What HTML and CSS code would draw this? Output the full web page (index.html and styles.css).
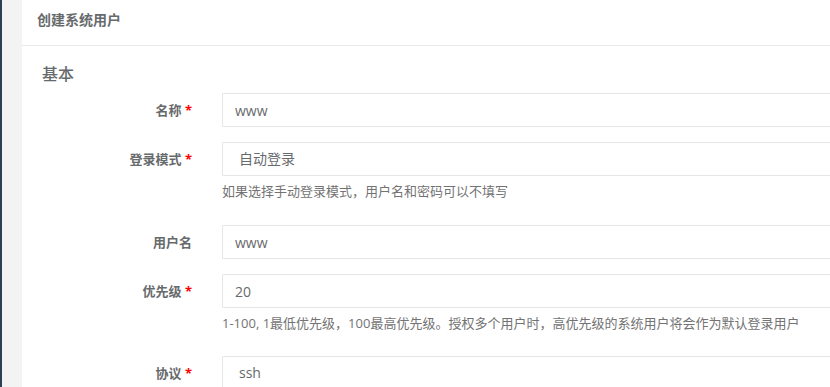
FILE: index.html
```html
<!DOCTYPE html>
<html lang="zh-CN">
<head>
    <meta charset="UTF-8">
    <meta name="viewport" content="width=device-width, initial-scale=1.0">
    <title>创建系统用户</title>
    <link rel="stylesheet" href="styles.css">
</head>
<body>
    <div class="page">
        <div class="nav-edge"></div>
        <div class="gutter"></div>
        <div class="ibox">
            <div class="ibox-title">
                <h5>创建系统用户</h5>
            </div>
            <div class="ibox-content">
                <h3>基本</h3>

                <div class="form-group">
                    <label class="control-label">名称 <span class="req">*</span></label>
                    <div class="field">
                        <input type="text" class="form-control" value="www">
                    </div>
                </div>

                <div class="form-group">
                    <label class="control-label">登录模式 <span class="req">*</span></label>
                    <div class="field">
                        <div class="form-control select">自动登录</div>
                        <div class="help-block">如果选择手动登录模式，用户名和密码可以不填写</div>
                    </div>
                </div>

                <div class="form-group">
                    <label class="control-label">用户名</label>
                    <div class="field">
                        <input type="text" class="form-control" value="www">
                    </div>
                </div>

                <div class="form-group">
                    <label class="control-label">优先级 <span class="req">*</span></label>
                    <div class="field">
                        <input type="text" class="form-control" value="20">
                        <div class="help-block short">1-100, 1最低优先级，100最高优先级。授权多个用户时，高优先级的系统用户将会作为默认登录用户</div>
                    </div>
                </div>

                <div class="form-group">
                    <label class="control-label">协议 <span class="req">*</span></label>
                    <div class="field">
                        <div class="form-control select">ssh</div>
                    </div>
                </div>
            </div>
        </div>
    </div>
</body>
</html>
```
FILE: styles.css
```css
html, body {
    margin: 0;
    padding: 0;
    overflow: hidden;
}

body {
    font-family: "Open Sans", "Noto Sans CJK SC", sans-serif;
    font-size: 13px;
    color: #676a6c;
    background-color: #fff;
}

.page {
    display: flex;
    height: 387px;
    overflow: hidden;
}

.nav-edge {
    width: 2px;
    background-color: #2f4050;
    flex-shrink: 0;
}

.gutter {
    width: 20px;
    background-color: #f3f3f4;
    flex-shrink: 0;
}

.ibox {
    flex: 1;
    min-width: 0;
    overflow: hidden;
    background-color: #fff;
}

.ibox-title {
    height: 34px;
    border-bottom: 1px solid #e7eaec;
    padding: 11px 15px 0;
}

.ibox-title h5 {
    margin: 0;
    font-size: 14px;
    line-height: 17px;
    font-weight: 600;
    color: #676a6c;
}

.ibox-content {
    padding: 18px 0 0 0;
}

.ibox-content h3 {
    margin: 0 0 9px 20px;
    font-size: 16px;
    line-height: 20px;
    font-weight: 500;
    color: #676a6c;
}

.form-group {
    display: grid;
    grid-template-columns: 170px 900px;
    column-gap: 30px;
    margin-bottom: 15px;
}

.control-label {
    text-align: right;
    font-weight: 700;
    font-size: 13px;
    line-height: 20px;
    padding-top: 7px;
    color: #676a6c;
}

.req {
    color: red;
}

.form-control {
    display: block;
    width: 100%;
    height: 34px;
    box-sizing: border-box;
    padding: 6px 12px;
    border: 1px solid #e5e6e7;
    border-radius: 1px;
    font-family: "Open Sans", "Noto Sans CJK SC", sans-serif;
    font-size: 14px;
    line-height: 20px;
    color: #676a6c;
    background-color: #fff;
    margin: 0;
}

.form-control.select {
    padding-left: 16px;
}

.help-block {
    margin: 5px 0 9px;
    font-size: 13px;
    line-height: 20px;
    color: #737373;
}

.help-block.short {
    margin-bottom: 8px;
}
```
